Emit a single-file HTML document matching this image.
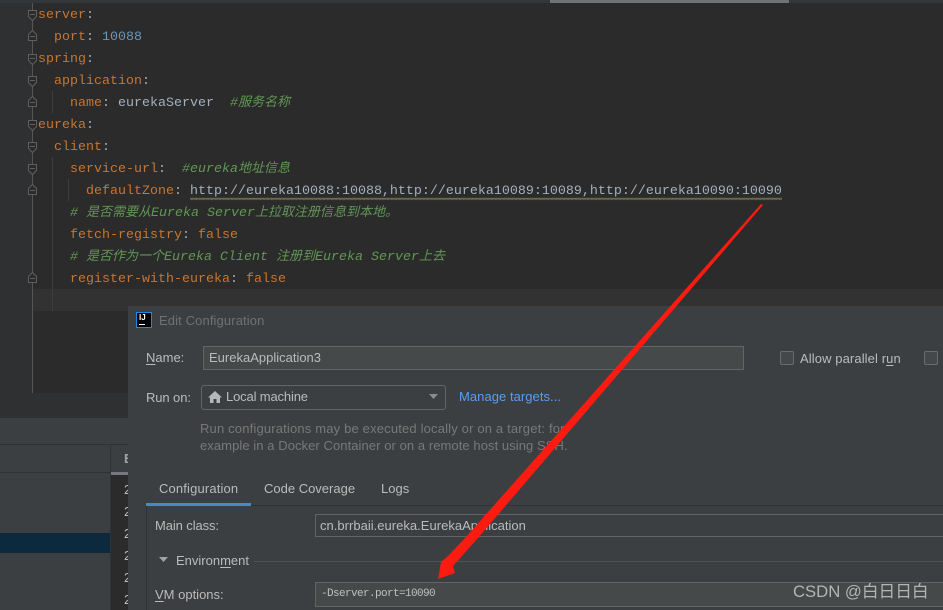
<!DOCTYPE html>
<html><head><meta charset="utf-8"><style>
html,body{margin:0;padding:0;background:#2b2b2b}
#r{position:relative;width:943px;height:610px;overflow:hidden;background:#2b2b2b}
.b{position:absolute}
.c{position:absolute;font:13.33px/22px "Liberation Mono","Noto Sans CJK SC",monospace;white-space:pre;height:22px;color:#a3b0bd;margin-top:2px}
.c i{font-size:13px;font-style:italic}
.k{color:#c57633}.n{color:#6897bb}.m{color:#629755;font-style:italic}.f{color:#c57633}
.t{position:absolute;font:13px/18px "Liberation Sans","Noto Sans CJK SC",sans-serif;white-space:pre;color:#bbbbbb}
u{text-underline-offset:2px}
</style></head><body><div id="r">
<div class="b" style="left:0;top:0;width:32px;height:393px;background:#2f3031"></div>
<div class="b" style="left:0;top:0;width:943px;height:3px;background:#33363a"></div>
<div class="b" style="left:550px;top:0;width:239px;height:3px;background:#6e7377"></div>
<div class="b" style="left:33px;top:289px;width:910px;height:22px;background:#323232"></div>
<div class="b" style="left:32px;top:3px;width:1px;height:390px;background:#555555"></div>
<div class="b" style="left:52px;top:91px;width:1px;height:22px;background:#3d3d3d"></div>
<div class="b" style="left:52px;top:157px;width:1px;height:154px;background:#3d3d3d"></div>
<div class="b" style="left:68px;top:179px;width:1px;height:22px;background:#3d3d3d"></div>
<svg class="b" style="left:0;top:0" width="60" height="300" fill="#2b2b2b" stroke="#606060" stroke-width="1">
<g id="o"><path d="M28.5 10.5h8v6l-4 4-4-4z"/><path d="M30 14.5h5"/></g>
<path d="M28.5 40.5h8v-6l-4-4-4 4z"/><path d="M30 36.5h5"/>
<path d="M28.5 54.5h8v6l-4 4-4-4z"/><path d="M30 58.5h5"/>
<path d="M28.5 76.5h8v6l-4 4-4-4z"/><path d="M30 80.5h5"/>
<path d="M28.5 106.5h8v-6l-4-4-4 4z"/><path d="M30 102.5h5"/>
<path d="M28.5 120.5h8v6l-4 4-4-4z"/><path d="M30 124.5h5"/>
<path d="M28.5 142.5h8v6l-4 4-4-4z"/><path d="M30 146.5h5"/>
<path d="M28.5 164.5h8v6l-4 4-4-4z"/><path d="M30 168.5h5"/>
<path d="M28.5 194.5h8v-6l-4-4-4 4z"/><path d="M30 190.5h5"/>
<path d="M28.5 282.5h8v-6l-4-4-4 4z"/><path d="M30 278.5h5"/>
</svg>
<div class="c" style="left:38px;top:3px"><span class="k">server</span>:</div>
<div class="c" style="left:54px;top:25px"><span class="k">port</span>: <span class="n">10088</span></div>
<div class="c" style="left:38px;top:47px"><span class="k">spring</span>:</div>
<div class="c" style="left:54px;top:69px"><span class="k">application</span>:</div>
<div class="c" style="left:70px;top:90px"><span class="k">name</span>: eurekaServer  <span class="m">#<i>服务名称</i></span></div>
<div class="c" style="left:38px;top:113px"><span class="k">eureka</span>:</div>
<div class="c" style="left:54px;top:135px"><span class="k">client</span>:</div>
<div class="c" style="left:70px;top:156px"><span class="k">service-url</span>:  <span class="m">#eureka<i>地址信息</i></span></div>
<div class="c" style="left:86px;top:179px"><span class="k">defaultZone</span>: http://eureka10088:10088,http://eureka10089:10089,http://eureka10090:10090</div>
<svg class="b" style="left:190px;top:197px" width="592" height="4"><defs><pattern id="w" width="4" height="4" patternUnits="userSpaceOnUse"><path d="M0 2.5L1 1.2 2 2.5 3 1.2 4 2.5" fill="none" stroke="#77774f" stroke-width="1"/></pattern></defs><rect width="592" height="4" fill="url(#w)"/></svg>
<div class="c m" style="left:70px;top:200px"># <i>是否需要从</i>Eureka Server<i>上拉取注册信息到本地。</i></div>
<div class="c" style="left:70px;top:223px"><span class="k">fetch-registry</span>: <span class="f">false</span></div>
<div class="c m" style="left:70px;top:244px"># <i>是否作为一个</i>Eureka Client <i>注册到</i>Eureka Server<i>上去</i></div>
<div class="c" style="left:70px;top:267px"><span class="k">register-with-eureka</span>: <span class="f">false</span></div>

<div class="b" style="left:0;top:393px;width:128px;height:25px;background:#2f3031"></div>
<div class="b" style="left:0;top:418px;width:128px;height:26px;background:#3c3f41"></div>
<div class="b" style="left:0;top:444px;width:128px;height:1px;background:#323232"></div>
<div class="b" style="left:0;top:445px;width:110px;height:165px;background:#3c3f41"></div>
<div class="b" style="left:0;top:472px;width:110px;height:1px;background:#323232"></div>
<div class="b" style="left:0;top:533px;width:110px;height:20px;background:#0d293e"></div>
<div class="b" style="left:110px;top:445px;width:1px;height:165px;background:#323232"></div>
<div class="b" style="left:111px;top:445px;width:17px;height:27px;background:#3c3f41"></div>
<div class="b" style="left:111px;top:472px;width:17px;height:3px;background:#747a80"></div>
<div class="b" style="left:111px;top:475px;width:17px;height:135px;background:#2b2b2b"></div>
<div class="t" style="left:124px;top:450px;font-weight:bold;color:#a0a0a0;width:4px;overflow:hidden">E</div>
<div class="t" style="left:124px;top:481px;width:4px;overflow:hidden">2</div>
<div class="t" style="left:124px;top:503px;width:4px;overflow:hidden">2</div>
<div class="t" style="left:124px;top:525px;width:4px;overflow:hidden">2</div>
<div class="t" style="left:124px;top:547px;width:4px;overflow:hidden">2</div>
<div class="t" style="left:124px;top:569px;width:4px;overflow:hidden">2</div>
<div class="t" style="left:124px;top:591px;width:4px;overflow:hidden">2</div>

<div class="b" style="left:128px;top:306px;width:815px;height:304px;background:#3c3f41"></div>
<div class="b" style="left:136px;top:312px;width:14px;height:14px;background:#000;border:1px solid #1e88e5"></div>
<div class="b" style="left:139px;top:313px;font:bold 8px/10px 'Liberation Sans',sans-serif;color:#fff">IJ</div>
<div class="b" style="left:139px;top:324px;width:6px;height:1px;background:#fff"></div>
<div class="t" style="left:159px;top:312px;color:#6f7173;letter-spacing:.12px">Edit Configuration</div>

<div class="t" style="left:146px;top:349px"><u>N</u>ame:</div>
<div class="b" style="left:203px;top:346px;width:539px;height:22px;background:#45494a;border:1px solid #646464"></div>
<div class="t" style="left:209px;top:349px">EurekaApplication3</div>
<div class="b" style="left:780px;top:351px;width:12px;height:12px;background:#43494a;border:1px solid #6b6b6b;border-radius:2px"></div>
<div class="t" style="left:800px;top:350px;letter-spacing:.1px">Allow parallel r<u>u</u>n</div>
<div class="b" style="left:924px;top:351px;width:12px;height:12px;background:#43494a;border:1px solid #6b6b6b;border-radius:2px"></div>

<div class="t" style="left:146px;top:389px;letter-spacing:-.1px">Run on:</div>
<div class="b" style="left:201px;top:385px;width:243px;height:23px;background:#3c3f41;border:1px solid #646464;border-radius:3px"></div>
<svg class="b" style="left:208px;top:391px" width="14" height="12"><path d="M7 0L14 6.5H12V12H8.5V8H5.500V12H2V6.500H0z" fill="#b4b8bb"/></svg>
<div class="t" style="left:226px;top:388px;letter-spacing:-.15px">Local machine</div>
<svg class="b" style="left:429px;top:394px" width="10" height="6"><path d="M0 0H9L4.500 5z" fill="#8a8d8f"/></svg>
<div class="t" style="left:459px;top:388px;color:#589df6;letter-spacing:.05px">Manage targets...</div>
<div class="t" style="left:200px;top:420px;color:#787878;letter-spacing:.17px">Run configurations may be executed locally or on a target: for</div>
<div class="t" style="left:200px;top:437px;color:#787878;letter-spacing:.07px">example in a Docker Container or on a remote host using SSH.</div>

<div class="t" style="left:159px;top:480px;letter-spacing:.15px">Configuration</div>
<div class="t" style="left:264px;top:480px">Code Coverage</div>
<div class="t" style="left:381px;top:480px">Logs</div>
<div class="b" style="left:146px;top:505px;width:797px;height:1px;background:#323232"></div>
<div class="b" style="left:146px;top:503px;width:105px;height:3px;background:#4a88c7"></div>
<div class="b" style="left:146px;top:506px;width:1px;height:104px;background:#323232"></div>

<div class="t" style="left:155px;top:517px;letter-spacing:-.1px">Main class:</div>
<div class="b" style="left:315px;top:514px;width:640px;height:21px;background:#3c3f41;border:1px solid #646464"></div>
<div class="t" style="left:320px;top:517px;letter-spacing:.02px">cn.brrbaii.eureka.EurekaApplication</div>

<svg class="b" style="left:159px;top:557px" width="10" height="6"><path d="M0 0H9L4.500 5z" fill="#a0a3a5"/></svg>
<div class="t" style="left:176px;top:552px">Environ<u>m</u>ent</div>
<div class="b" style="left:254px;top:561px;width:689px;height:1px;background:#515151"></div>

<div class="t" style="left:155px;top:586px"><u>V</u>M options:</div>
<div class="b" style="left:315px;top:582px;width:640px;height:23px;background:#45494a;border:1px solid #646464"></div>
<div class="b" style="left:321px;top:585px;font:11px/18px 'Liberation Mono',monospace;letter-spacing:-.6px;white-space:pre;color:#c0c0c0">-Dserver.port=10090</div>

<div class="b" style="left:793px;top:581px;font:16.700px/22px 'Liberation Sans','Noto Sans CJK SC',sans-serif;white-space:pre;color:#b4b4b4">CSDN @白日日白</div>

<svg class="b" style="left:0;top:0" width="943" height="610"><polygon points="761,204 763,205 478,538 453,566 455,573 438,579 441,562 448,556 465,538" fill="#fb1b10"/></svg>
</div></body></html>
